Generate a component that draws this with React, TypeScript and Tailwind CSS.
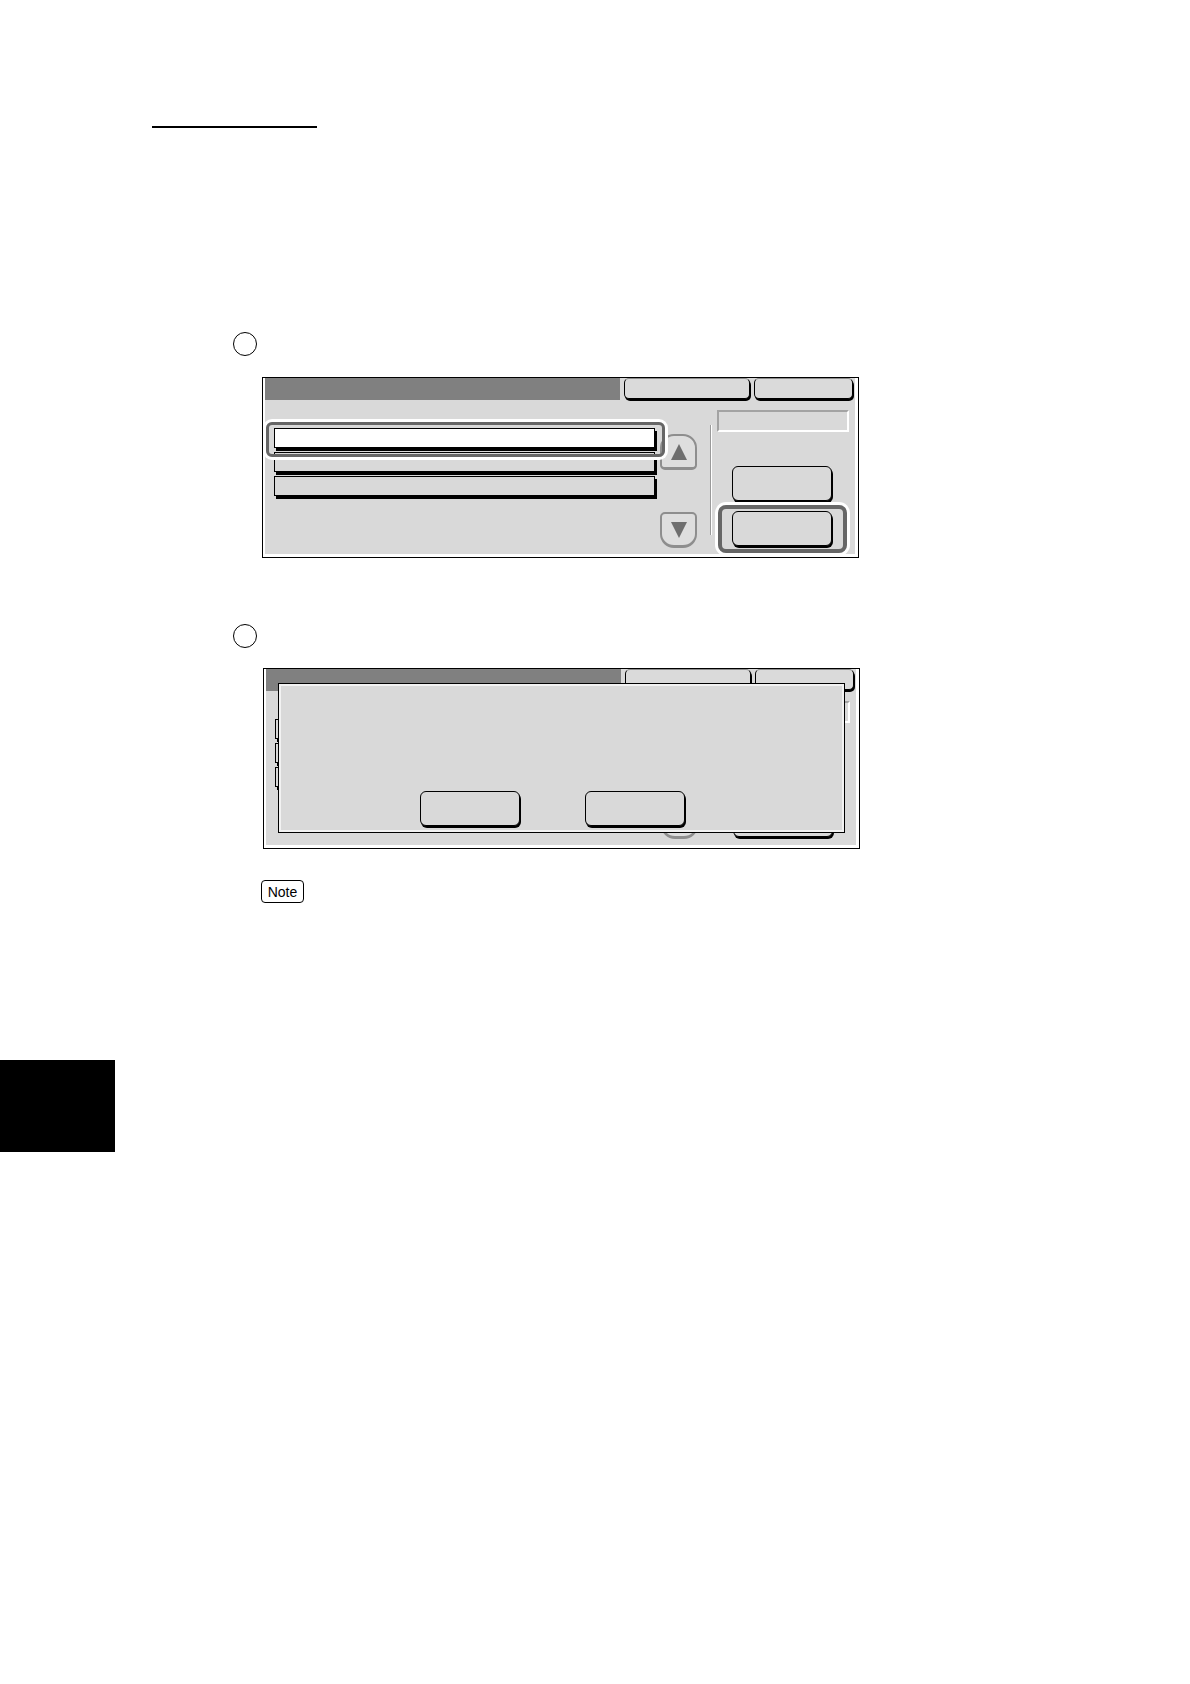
import React from 'react';

// Raised UI button: thin dark outline with a heavier black edge bottom/right
function RaisedButton({ className = '' }: { className?: string }) {
  return (
    <div
      className={`h-[35px] w-[100px] rounded-[6px] border border-black bg-[#d9d9d9] shadow-[1px_2px_0_0_#000] ${className}`}
    />
  );
}

function Tab({ width }: { width: string }) {
  return (
    <div
      className={`h-[21px] ${width} rounded-[5px] border border-black border-t-[#8c8c8c] bg-[#dadada] shadow-[1px_2px_0_0_#000]`}
    />
  );
}

function ListItem({ selected = false }: { selected?: boolean }) {
  return (
    <div className="relative">
      {selected && (
        <div className="absolute -left-[8px] -top-[6px] z-10 h-[35px] w-[399px] rounded-[6px] border-[3px] border-[#666] shadow-[0_0_0_3px_#fff]" />
      )}
      <div
        className={`relative h-[20px] w-[381px] border border-black shadow-[2px_3px_0_0_#000] ${
          selected ? 'bg-white' : 'bg-[#d9d9d9]'
        }`}
      />
    </div>
  );
}

function ScrollButton({ dir }: { dir: 'up' | 'down' }) {
  return (
    <div
      className={`flex h-[36px] w-[37px] items-center justify-center border-2 border-[#8e8e8e] border-b-[3px] bg-[#dedede] ${
        dir === 'up' ? 'rounded-t-[14px] rounded-b-[5px]' : 'rounded-t-[5px] rounded-b-[14px]'
      }`}
    >
      <svg width="18" height="18" viewBox="0 0 18 18">
        {dir === 'up' ? (
          <polygon points="9,1 17,17 1,17" fill="#6e6e6e" />
        ) : (
          <polygon points="1,1 17,1 9,17" fill="#6e6e6e" />
        )}
      </svg>
    </div>
  );
}

function Panel({ highlight = false, children }: { highlight?: boolean; children?: React.ReactNode }) {
  return (
    <div className="relative h-[181px] w-[597px] border border-black bg-white">
      <div className="mb-[3px] ml-[2px] mr-[3px] flex h-[176px] flex-col bg-[#d9d9d9]">
        {/* header */}
        <div className="flex h-[22px] items-start gap-[4px]">
          <div className="h-[22px] flex-1 bg-[#808080]" />
          <Tab width="w-[126px]" />
          <div className="mr-[2px]">
            <Tab width="w-[99px]" />
          </div>
        </div>
        {/* body */}
        <div className="flex flex-1">
          <div className="flex w-[395px] flex-col gap-[4px] pl-[9px] pt-[28px]">
            <ListItem selected={highlight} />
            <ListItem />
            <ListItem />
          </div>
          <div className="flex w-[37px] flex-col pt-[34px]">
            <ScrollButton dir="up" />
            <div className="h-[42px]" />
            <ScrollButton dir="down" />
          </div>
          <div className="ml-[13px] mt-[25px] h-[110px] w-[2px] border-l border-r border-l-[#9a9a9a] border-r-white" />
          <div className="ml-[5px] flex w-[132px] flex-col pt-[10px]">
            <div className="h-[22px] w-[132px] border-2 border-[#a3a3a3] border-b-white border-r-white bg-[#d9d9d9]" />
            <div className="ml-[15px] mt-[34px]">
              <RaisedButton />
            </div>
            <div className="relative ml-[15px] mt-[10px]">
              {highlight && (
                <div className="absolute -left-[14px] -top-[6px] h-[48px] w-[129px] rounded-[8px] border-[4px] border-[#666] shadow-[0_0_0_3px_#fff]" />
              )}
              <RaisedButton className="relative" />
            </div>
          </div>
        </div>
      </div>
      {children}
    </div>
  );
}

export default function App() {
  return (
    <div className="relative min-h-[1684px] w-[1190px] bg-white pt-[126px] font-['Liberation_Sans',Arial,sans-serif]">
      {/* running header rule */}
      <div className="ml-[152px] h-[2px] w-[165px] bg-black" />

      {/* step 1 */}
      <div className="ml-[233px] mt-[204px] h-[24px] w-[24px] rounded-full border border-black" />
      <div className="ml-[262px] mt-[21px]">
        <Panel highlight />
      </div>

      {/* step 2 */}
      <div className="ml-[233px] mt-[66px] h-[24px] w-[24px] rounded-full border border-black" />
      <div className="ml-[263px] mt-[20px]">
        <Panel>
          {/* confirmation dialog over the screen */}
          <div className="absolute left-[14px] top-[14px] h-[150px] w-[567px] border border-black bg-[#d9d9d9] shadow-[inset_0_0_0_2px_#f2f2f2]">
            <div className="flex pl-[141px] pt-[107px]">
              <RaisedButton />
              <RaisedButton className="ml-[65px]" />
            </div>
          </div>
        </Panel>
      </div>

      {/* note badge */}
      <div className="ml-[261px] mt-[31px] flex h-[23px] w-[43px] items-center justify-center rounded-[4px] border border-black text-[14px] leading-none text-black">
        Note
      </div>

      {/* chapter tab */}
      <div className="mt-[157px] h-[92px] w-[115px] bg-black" />
    </div>
  );
}
